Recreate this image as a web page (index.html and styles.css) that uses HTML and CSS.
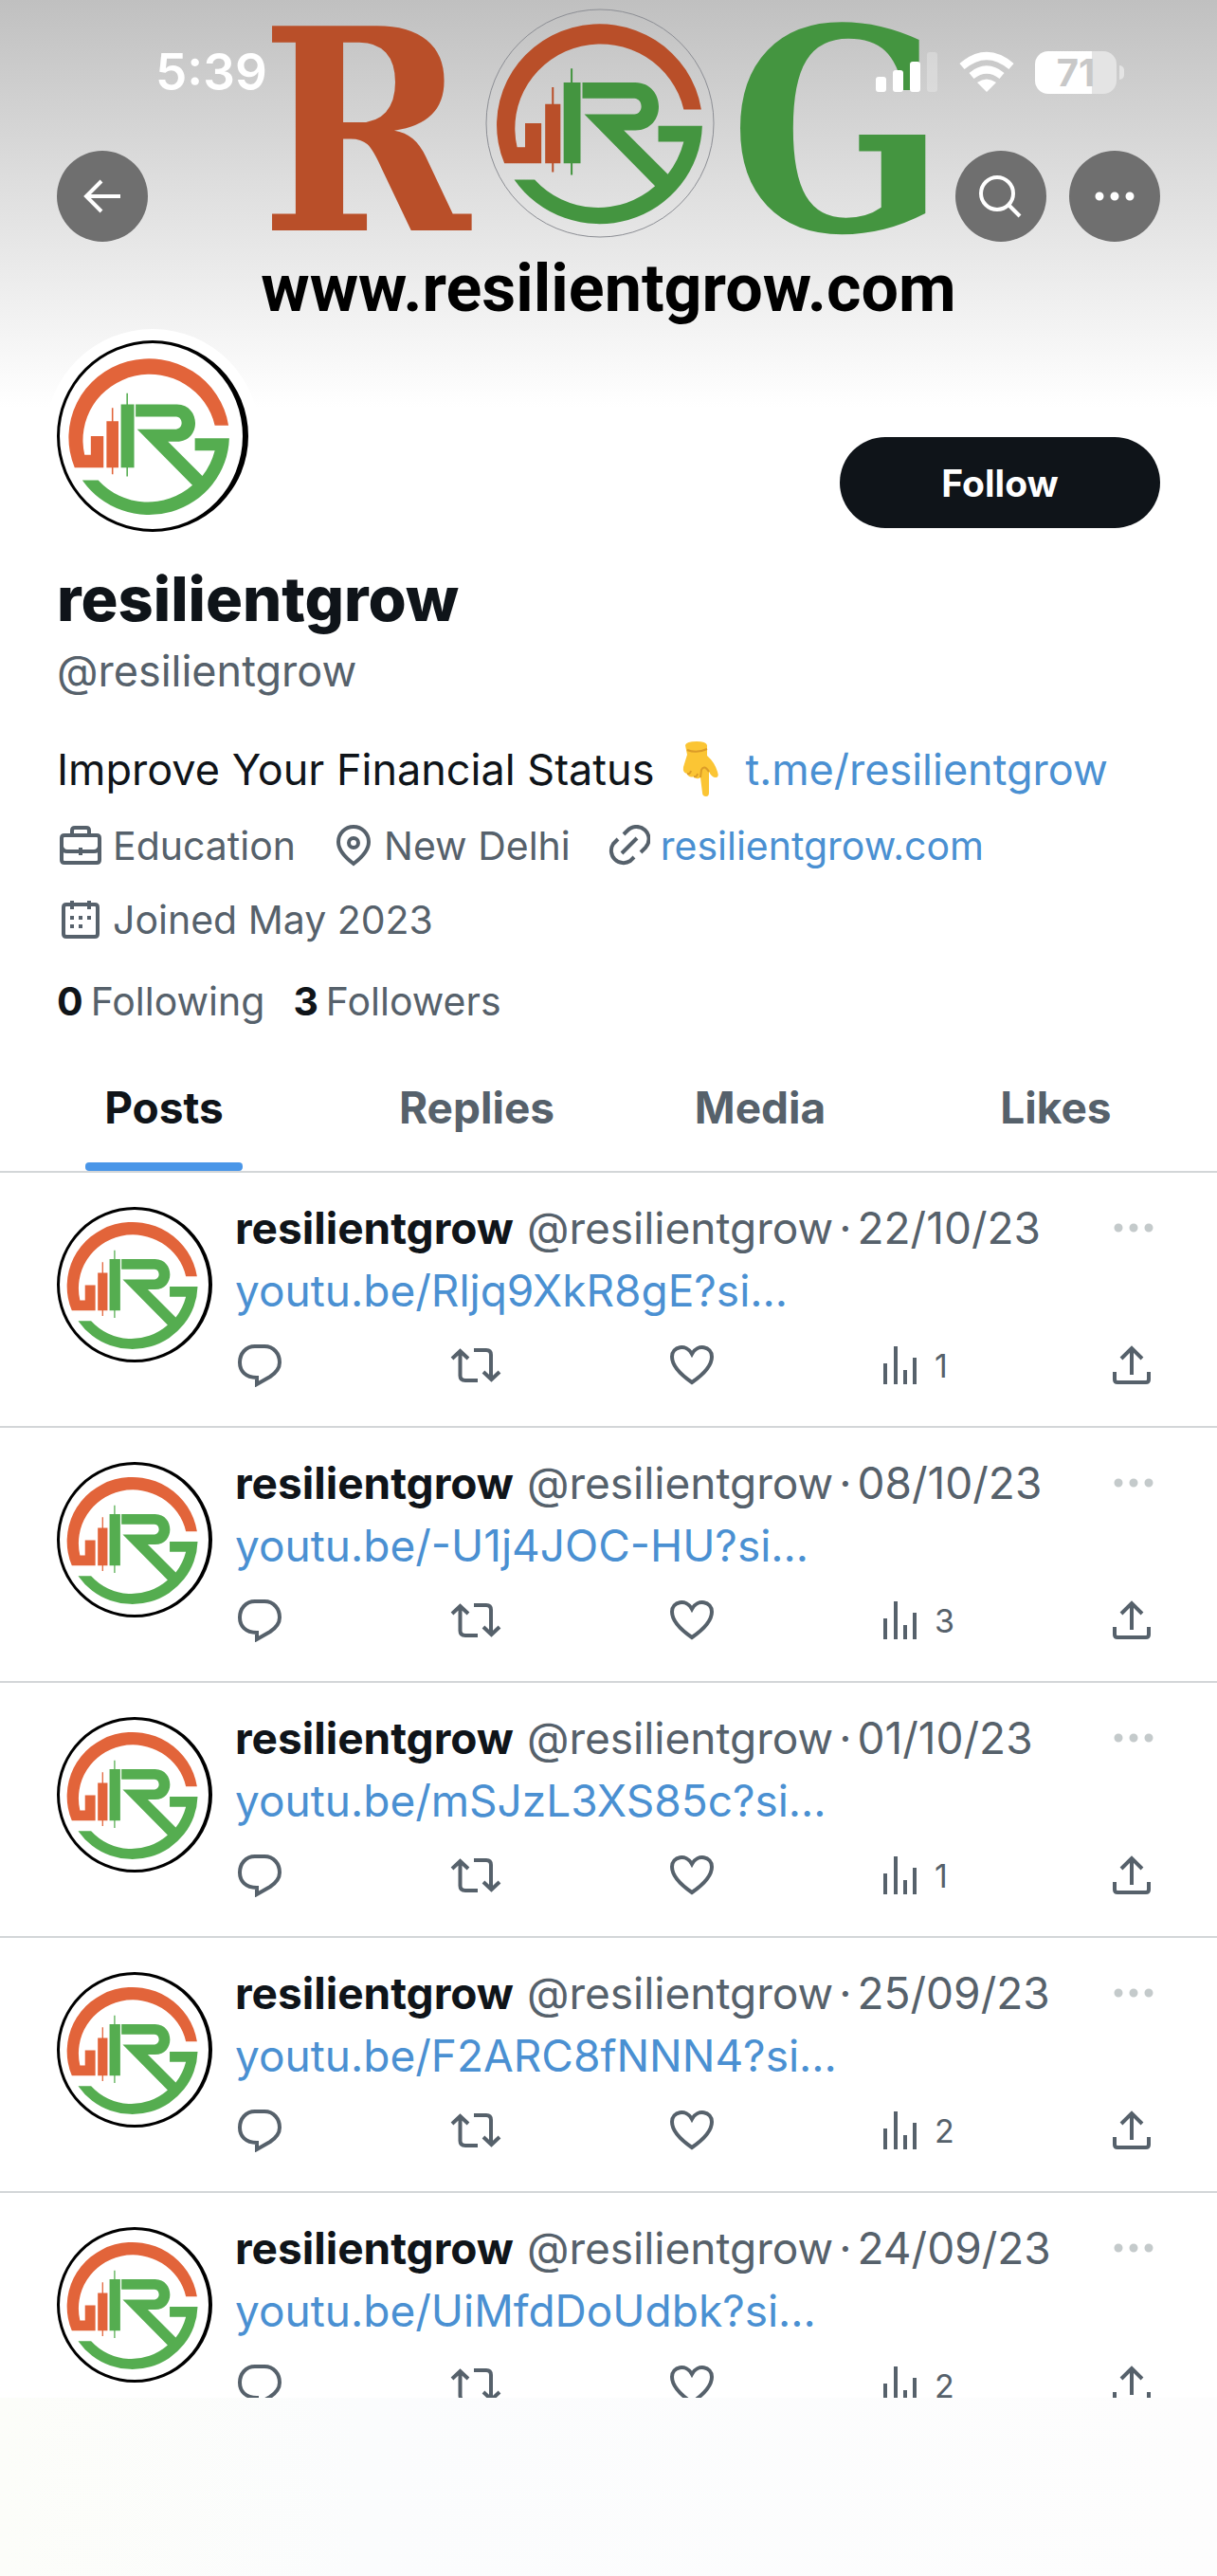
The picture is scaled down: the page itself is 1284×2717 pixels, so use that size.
FILE: index.html
```html
<!DOCTYPE html>
<html lang="en">
<head>
<meta charset="utf-8">
<meta name="viewport" content="width=device-width, initial-scale=1">
<title>resilientgrow (@resilientgrow)</title>
<link rel="stylesheet" href="styles.css">
</head>
<body>
<svg class="defs" aria-hidden="true">
  <symbol id="mark" viewBox="97 30 720 720">
    <path class="o" d="M157 516A323 317 0 1 1 775 347H720A268 264 0 1 0 197 465H222V390H273V516Z"/>
    <path class="o" d="M285 330H306V277H312V330H333V516H312V543H306V516H285Z"/>
    <path class="g" d="M343 262H365V218H371V262H396V516H371V552H365V516H343Z"/>
    <path class="g" d="M402 262H568C666 264 666 412 568 412H532L670 550Q705 505 720 448H640V398H778A323 317 0 0 1 188 567H252A268 265 0 0 0 630 587L408 362H565C594 360 594 314 565 312H402Z"/>
  </symbol>
  <symbol id="i-reply" viewBox="0 0 48 46"><path d="M19 3H29C39 3 45 11 45 20C45 27 41 31 35 35L21 43V36C9 36 3 29 3 20C3 11 9 3 19 3Z" fill="none" stroke="currentColor" stroke-width="4"/></symbol>
  <symbol id="i-repost" viewBox="0 0 56 40"><path d="M3 13L11.500 5L20 13M11.500 6V31Q11.500 36 17 36H30M26 4H39Q44 4 44 9V34M36 27L44.500 35L53 27" fill="none" stroke="currentColor" stroke-width="4"/></symbol>
  <symbol id="i-like" viewBox="0 0 48 44"><path d="M24 40C8 29 3 21 3 13C3 2 18 -1 24 10C30 -1 45 2 45 13C45 21 40 29 24 40Z" fill="none" stroke="currentColor" stroke-width="4"/></symbol>
  <symbol id="i-views" viewBox="0 0 40 44"><path d="M4 20V42M15 2V42M25 27V42M35 14V42" fill="none" stroke="currentColor" stroke-width="4"/></symbol>
  <symbol id="i-share" viewBox="0 0 44 44"><path d="M22 32V4M11 15L22 4L33 15M4 29V37Q4 40 7 40H37Q40 40 40 37V29" fill="none" stroke="currentColor" stroke-width="4"/></symbol>
  <symbol id="i-dots" viewBox="0 0 42 12"><path d="M5 6H5.010M21 6H21.010M37 6H37.010" fill="none" stroke="currentColor" stroke-width="9" stroke-linecap="round"/></symbol>
</svg>

<header class="banner">
  <div class="art">
    <div class="wordmark">
      <span class="r">R</span>
      <svg class="seal" viewBox="0 0 242 242" aria-hidden="true"><circle cx="121" cy="121" r="120" fill="none" stroke="#8c8e94"/><use href="#mark"/></svg>
      <span class="gee">G</span>
    </div>
    <div class="site">www.resilientgrow.com</div>
  </div>
  <div class="status">
    <time class="clock">5:39</time>
    <div class="signals">
      <svg width="66" height="44" viewBox="0 0 66 44" aria-label="Signal"><g fill="#fff"><rect x="0" y="27" width="11" height="16" rx="3"/><rect x="18" y="20" width="11" height="23" rx="3"/><rect x="36" y="11" width="11" height="32" rx="3"/><rect x="54" y="1" width="11" height="42" rx="3" opacity=".25"/></g></svg>
      <svg width="58" height="44" viewBox="0 0 58 44" aria-label="Wi-Fi"><g fill="none" stroke="#fff" stroke-width="8"><path d="M3 16Q29 -6 55 16"/><path d="M13 26Q29 13 45 26"/></g><path d="M19 33Q29 26 39 33L29 43Z" fill="#fff"/></svg>
      <div class="battery">71</div>
    </div>
  </div>
  <nav class="bar">
    <button class="round" aria-label="Back"><svg width="40" height="40" viewBox="0 0 40 40"><path d="M39 20H3M19 4L3 20L19 36" fill="none" stroke="#fff" stroke-width="4"/></svg></button>
    <button class="round push" aria-label="Search"><svg width="48" height="48" viewBox="0 0 48 48"><circle cx="20" cy="21" r="17" fill="none" stroke="#fff" stroke-width="4"/><path d="M32 33L44 45" stroke="#fff" stroke-width="4"/></svg></button>
    <button class="round" aria-label="More"><svg width="42" height="12"><use href="#i-dots"/></svg></button>
  </nav>
</header>

<main>
  <section class="profile">
    <div class="top">
      <div class="avatar big"><svg aria-label="resilientgrow"><use href="#mark"/></svg></div>
      <button class="follow">Follow</button>
    </div>
    <h1>resilientgrow</h1>
    <p class="handle">@resilientgrow</p>
    <p class="bio">Improve Your Financial Status
      <svg width="44" height="62" viewBox="0 0 44 62" aria-label="pointing down"><path d="M7 5Q8 1 19 1Q29 1 30 5L30 16Q38 23 41 33Q43 39 39 39Q35 39 32 33V55Q32 59 29 59Q25 59 25 55L23 39Q19 42 16 38Q11 40 9 35Q4 34 5 28L9 15Z" fill="#fbc534"/><path d="M16 38Q19 39 20 35M9 35Q12 36 13 32M23 39L24 31Q27 25 32 33M9 10Q19 14 30 9" fill="none" stroke="#dc9c28" stroke-width="2"/></svg>
      <a href="#">t.me/resilientgrow</a></p>
    <ul class="meta">
      <li><svg width="46" height="44" viewBox="0 0 46 44"><path d="M14 11V6Q14 3 17 3H29Q32 3 32 6V11M6 11H40Q43 11 43 14V37Q43 40 40 40H6Q3 40 3 37V14Q3 11 6 11ZM3 23Q4 28 9 28H37Q42 28 43 23M23 24V32" fill="none" stroke="currentColor" stroke-width="4"/></svg>Education</li>
      <li><svg width="42" height="44" viewBox="0 0 42 44"><path d="M21 41Q5 29 5 18A16 16 0 0 1 37 18Q37 29 21 41Z" fill="none" stroke="currentColor" stroke-width="4"/><circle cx="21" cy="19" r="5" fill="none" stroke="currentColor" stroke-width="4"/></svg>New Delhi</li>
      <li><svg width="44" height="44" viewBox="0 0 44 44"><path d="M16 10L20 6A13 13 0 0 1 39 24L34 29M27 34L23 38A13 13 0 0 1 5 20L10 15M14 30L30 14" fill="none" stroke="currentColor" stroke-width="4"/></svg><a href="#">resilientgrow.com</a></li>
      <li><svg width="46" height="44" viewBox="0 0 46 44"><path d="M8 6H38Q41 6 41 9V37Q41 40 38 40H8Q5 40 5 37V9Q5 6 8 6ZM14 2V11M32 2V11" fill="none" stroke="currentColor" stroke-width="4"/><path d="M12 20H34M12 29H25" stroke="currentColor" stroke-width="4" stroke-dasharray="4 5"/></svg>Joined May 2023</li>
    </ul>
    <p class="counts"><span><b>0</b> Following</span><span><b>3</b> Followers</span></p>
  </section>

  <nav class="tabs">
    <a href="#" class="on"><span>Posts</span></a><a href="#"><span>Replies</span></a><a href="#"><span>Media</span></a><a href="#"><span>Likes</span></a>
  </nav>

  <section class="feed" id="feed"></section>
</main>
<footer class="dock"></footer>
<script src="feed.js"></script>
</body>
</html>
```
FILE: feed.js
```js
const posts = [
  ["22/10/23", "youtu.be/Rljq9XkR8gE?si…", 1],
  ["08/10/23", "youtu.be/-U1j4JOC-HU?si…", 3],
  ["01/10/23", "youtu.be/mSJzL3XS85c?si…", 1],
  ["25/09/23", "youtu.be/F2ARC8fNNN4?si…", 2],
  ["24/09/23", "youtu.be/UiMfdDoUdbk?si…", 2]
];

const icon = (name, w, h) => `<svg width="${w}" height="${h}" aria-hidden="true"><use href="#i-${name}"/></svg>`;

document.getElementById("feed").innerHTML = posts.map(([date, link, views]) => `
  <article class="post">
    <div class="avatar"><svg aria-hidden="true"><use href="#mark"/></svg></div>
    <div class="body">
      <div class="head">
        <b>resilientgrow</b>
        <span class="by">@resilientgrow</span>
        <span class="dot">·</span>
        <time>${date}</time>
        <button class="more" aria-label="More">${icon("dots", 42, 12)}</button>
      </div>
      <a class="link" href="#">${link}</a>
      <div class="actions">
        <button aria-label="Reply">${icon("reply", 48, 46)}</button>
        <button aria-label="Repost">${icon("repost", 56, 40)}</button>
        <button aria-label="Like">${icon("like", 48, 44)}</button>
        <button class="views" aria-label="Views">${icon("views", 40, 44)}<span>${views}</span></button>
        <button aria-label="Share">${icon("share", 44, 44)}</button>
      </div>
    </div>
  </article>`).join("");
```
FILE: styles.css
```css
* { box-sizing: border-box; }
body {
  --orange: #e2643a;
  --green: #55ad50;
  --ink: #0f1419;
  --slate: #56616b;
  --link: #4a90d2;
  --rule: #d3d6d8;
  margin: 0;
  background: #fff;
  color: var(--ink);
  font-family: Inter, "Liberation Sans", sans-serif;
  font-size: 46px;
}
h1, p, ul { margin: 0; padding: 0; }
a { color: var(--link); text-decoration: none; }
button { border: 0; padding: 0; background: none; color: inherit; font: inherit; }
svg { flex: none; display: block; }
.defs { position: absolute; width: 0; height: 0; }
.o { fill: var(--orange); }
.g { fill: var(--green); }

.banner {
  display: grid;
  height: 430px;
  background: linear-gradient(#c0c0c0, #dedede 45%, #f3f3f3 80%, #fff);
}
.banner > * { grid-area: 1 / 1; }
.art {
  --orange: #b94f29;
  --green: #449540;
  display: flex;
  flex-direction: column;
  align-items: center;
}
.wordmark {
  display: flex;
  align-items: center;
  gap: 16px;
  height: 278px;
  padding-right: 12px;
  font: bold 296px/278px "DejaVu Serif Condensed", "DejaVu Serif", serif;
}
.r { color: var(--orange); }
.gee { color: var(--green); }
.seal { width: 242px; height: 242px; margin-bottom: 18px; }
.site { font: bold 70px/52px Roboto, sans-serif; color: #000; }
.status {
  display: flex;
  justify-content: space-between;
  align-items: center;
  align-self: start;
  height: 48px;
  margin-top: 52px;
  padding: 0 106px 0 164px;
}
.clock { font-size: 53px; font-weight: 600; color: #fff; }
.signals { display: flex; align-items: center; gap: 22px; }
.battery {
  position: relative;
  width: 86px;
  height: 45px;
  border-radius: 14px;
  background: linear-gradient(90deg, #fff 70%, #e4e4e4 70%);
  color: #c8c8c8;
  font-size: 40px;
  font-weight: 700;
  line-height: 45px;
  text-align: center;
}
.battery::after {
  content: "";
  position: absolute;
  left: 89px;
  top: 15px;
  width: 5px;
  height: 15px;
  border-radius: 0 8px 8px 0;
  background: #e4e4e4;
}
.bar { display: flex; gap: 24px; align-self: start; margin-top: 159px; padding: 0 60px; }
.round {
  display: flex;
  align-items: center;
  justify-content: center;
  width: 96px;
  height: 96px;
  border-radius: 50%;
  background: #6f6f6f;
  color: #fff;
}
.push { margin-left: auto; }

.profile { padding: 0 60px; color: var(--slate); }
.top { display: flex; justify-content: space-between; align-items: flex-end; margin-top: -80px; }
.avatar {
  flex: none;
  display: flex;
  align-items: center;
  width: 164px;
  height: 164px;
  border: 3px solid #000;
  border-right-width: 4px;
  border-radius: 50%;
  background: #fff;
}
.avatar svg { width: 98%; height: 98%; }
.big { width: 202px; height: 202px; margin-top: 9px; border-right-width: 6px; box-shadow: 0 0 0 12px #fff; }
.follow {
  width: 338px;
  height: 96px;
  margin-bottom: 4px;
  border-radius: 48px;
  background: var(--ink);
  color: #fff;
  font-size: 39px;
  font-weight: 700;
}
h1 { margin-top: 31px; color: var(--ink); font-size: 65px; font-weight: 800; line-height: 80px; }
.handle { font-size: 45px; line-height: 72px; }
.bio { display: flex; align-items: center; gap: 26px; margin-top: 34px; font-size: 45px; line-height: 68px; color: var(--ink); }
.meta { display: flex; flex-wrap: wrap; column-gap: 40px; margin-top: 7px; padding-left: 2px; list-style: none; font-size: 41px; line-height: 78px; }
.meta li { display: flex; align-items: center; gap: 11px; }
.counts { display: flex; gap: 30px; margin-top: 13px; font-size: 41px; line-height: 68px; }
.counts span { display: flex; gap: 8px; }
.counts b { color: var(--ink); }

.tabs {
  display: grid;
  grid-template-columns: 346fr 314fr 284fr 340fr;
  justify-items: center;
  margin-top: 20px;
  border-bottom: 2px solid var(--rule);
  font-weight: 700;
}
.tabs a { color: var(--slate); }
.tabs span { display: block; padding: 28px 20px 0; line-height: 60px; }
.tabs span::after { content: ""; display: block; height: 9px; margin: 28px -20px 0; border-radius: 4px; }
.tabs .on { color: var(--ink); }
.tabs .on span::after { background: #4a96e8; }

.post { display: flex; gap: 24px; height: 269px; padding: 36px 60px 0; border-bottom: 2px solid var(--rule); }
.body { flex: 1; min-width: 0; color: var(--slate); }
.head { display: flex; align-items: center; gap: 6px; height: 44px; line-height: 44px; }
.head b { margin-right: 8px; color: var(--ink); }
.more { margin: 0 7px 0 auto; color: #c4cacb; }
.link { display: block; margin-top: 12px; line-height: 64px; }
.actions { display: flex; justify-content: space-between; align-items: center; height: 46px; margin-top: 24px; padding: 0 8px 0 2px; }
.actions button { display: flex; align-items: center; gap: 16px; font-size: 34px; }
.actions .views { width: 66px; }
.dock {
  position: fixed;
  inset: auto 0 0;
  height: 188px;
  background: linear-gradient(90deg, #fcfdf9, #fbfcfd 30%, #fdfdfd);
}
```
